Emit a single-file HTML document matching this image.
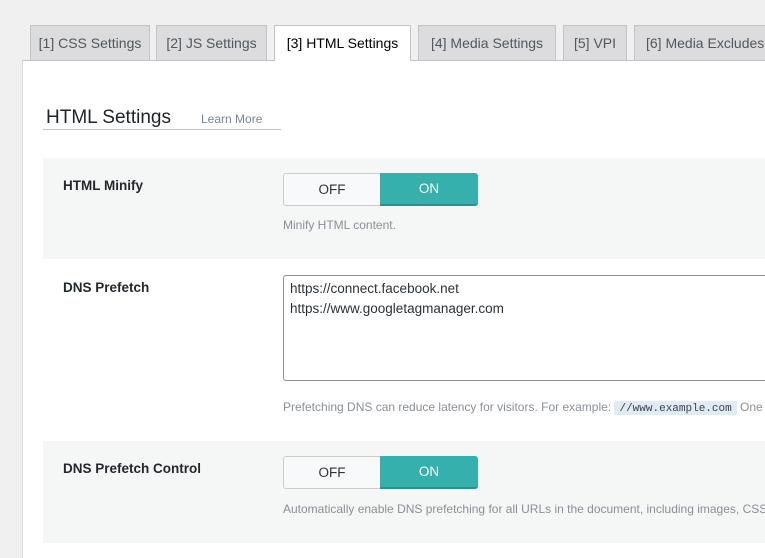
<!DOCTYPE html>
<html><head><meta charset="utf-8"><style>
*{box-sizing:border-box;margin:0;padding:0}
html,body{overflow:hidden}
body{width:765px;height:558px;background:#f0f0f1;font-family:"Liberation Sans",sans-serif;color:#1d2327;position:relative}
.tab{position:absolute;top:25px;height:35px;background:#dcdcde;border:1px solid #c3c4c7;border-bottom:none;font-size:14px;color:#50575e;line-height:34px;text-align:center;white-space:nowrap;overflow:hidden}
.tab.act{background:#fff;color:#000;height:36px;z-index:2}
.panel{position:absolute;left:22px;top:60px;width:743px;height:498px;background:#fff;border-left:1px solid #dcdcde;border-top:1px solid #c3c4c7}
.abs{position:absolute}
.row{position:absolute;left:43px;width:722px;background:#f5f6f6}
.lbl{position:absolute;left:63px;font-size:13.5px;font-weight:bold;color:#23282d}
.tog{position:absolute;left:283px;width:195px;height:33px;border-radius:3px;display:flex;font-size:13.5px;line-height:31px;text-align:center}
.tog .off{width:97px;background:#f8f9fa;border:1px solid #ccc;border-right:none;border-radius:3px 0 0 3px;color:#333}
.tog .on{width:98px;background:#35b0ac;color:#fff;border-bottom:2px solid #2a928e;border-radius:0 3px 3px 0}
.desc{position:absolute;left:283px;width:482px;overflow:hidden;font-size:12px;color:#8a9097;white-space:nowrap}
</style></head><body>
<div class="tab" style="left:30px;width:120px">[1] CSS Settings</div>
<div class="tab" style="left:156px;width:111px">[2] JS Settings</div>
<div class="tab act" style="left:274px;width:137px">[3] HTML Settings</div>
<div class="tab" style="left:418px;width:138px">[4] Media Settings</div>
<div class="tab" style="left:563px;width:64px">[5] VPI</div>
<div class="tab" style="left:634px;width:131px;border-right:none;text-align:left;padding-left:11px">[6] Media Excludes</div>
<div class="panel"></div>
<div class="abs" style="left:46px;top:107px;font-size:19px;color:#1d2327">HTML Settings</div>
<div class="abs" style="left:201px;top:112px;font-size:12px;color:#7a8690">Learn More</div>
<div class="abs" style="left:43px;top:129px;width:238px;height:1px;background:#c3c4c7"></div>

<div class="row" style="top:158px;height:101px"></div>
<div class="lbl" style="top:178px">HTML Minify</div>
<div class="tog" style="top:173px"><div class="off">OFF</div><div class="on">ON</div></div>
<div class="desc" style="top:218px">Minify HTML content.</div>

<div class="lbl" style="top:280px">DNS Prefetch</div>
<div class="abs" style="left:283px;top:275px;width:490px;height:106px;border:1px solid #8c8f94;border-radius:3px;background:#fff;padding:3px 6px;font-size:13.5px;line-height:20px;color:#2c3338">https://connect.facebook.net<br>https://www.googletagmanager.com</div>
<div class="desc" style="top:400px">Prefetching DNS can reduce latency for visitors. For example: <span style="background:#e1ebf5;font-family:'Liberation Mono',monospace;font-size:11px;color:#3c434a;padding:2px 5px;border-radius:2px">//www.example.com</span> One per line</div>

<div class="row" style="top:441px;height:102px"></div>
<div class="lbl" style="top:461px">DNS Prefetch Control</div>
<div class="tog" style="top:456px"><div class="off">OFF</div><div class="on">ON</div></div>
<div class="desc" style="top:502px">Automatically enable DNS prefetching for all URLs in the document, including images, CSS, JavaScript</div>
</body></html>
